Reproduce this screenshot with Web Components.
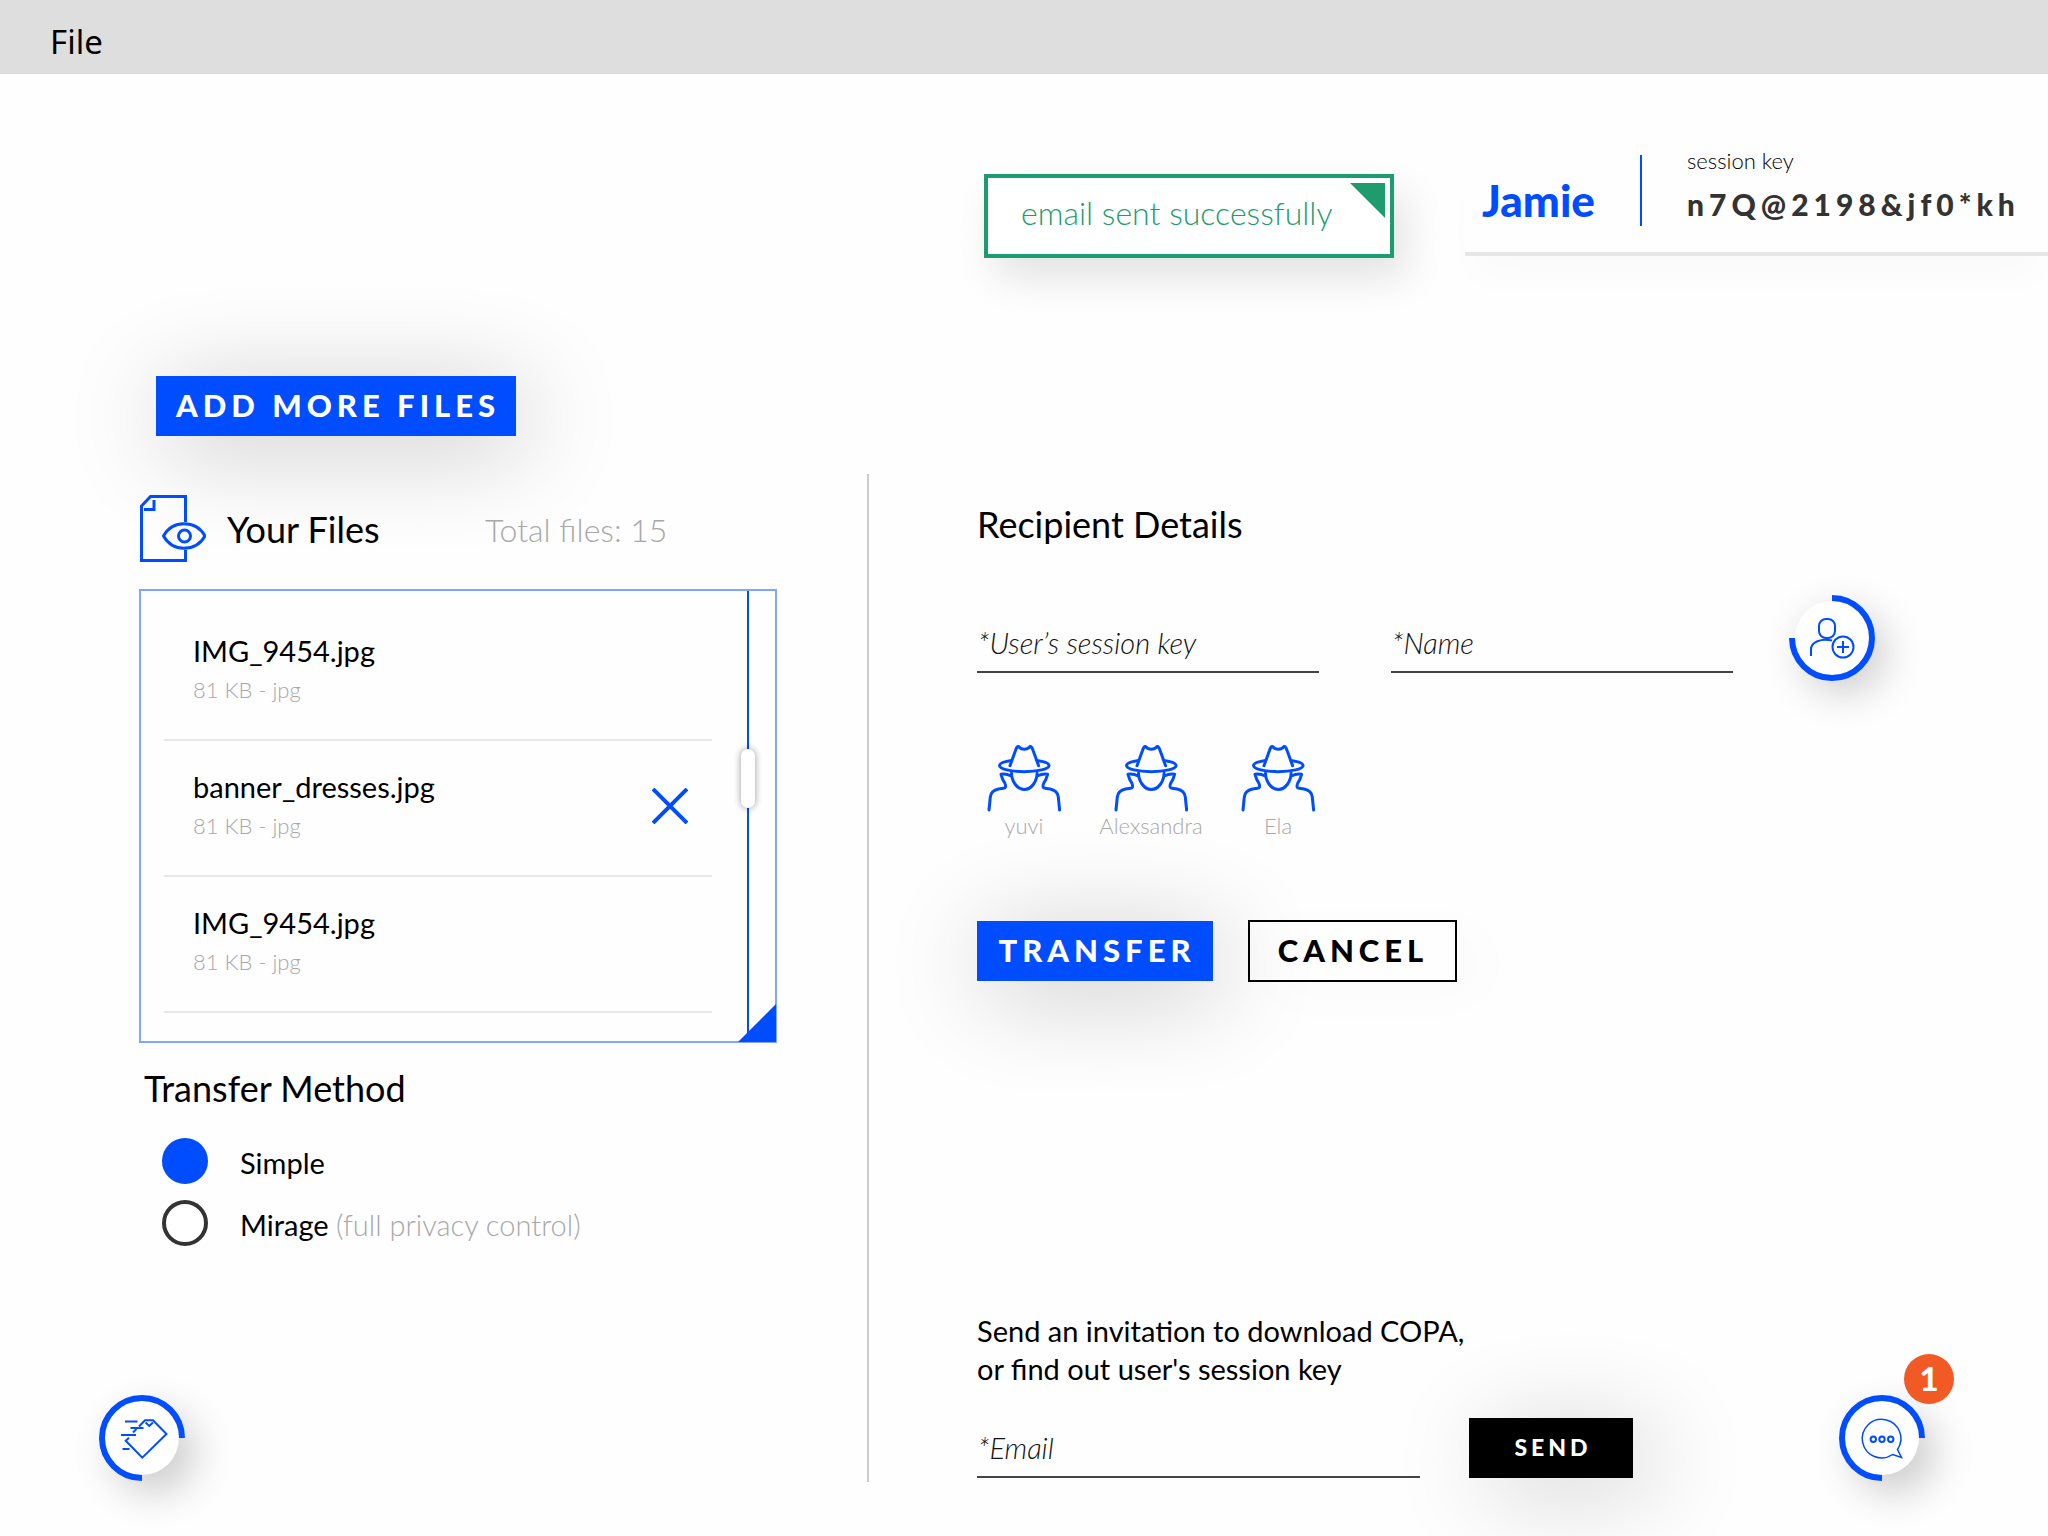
<!DOCTYPE html>
<html lang="en">
<head>
<meta charset="utf-8">
<title>COPA – file transfer</title>
<style>
  html, body { margin: 0; }
  body {
    --blue: #004dff;
    --green: #1f9c6e;
    --ink: #333;
    --muted: #a8a8a8;
    --text: 29px;
    --small: 22px;
    --title: 36px;
    background: #fefefe;
    color: #000;
    font-family: Lato, "Liberation Sans", sans-serif;
    font-weight: 400;
    overflow-x: hidden;
  }
</style>
</head>
<body>
<copa-app></copa-app>

<script>
  const define = (name, html, setup) => customElements.define(name, class extends HTMLElement {
    constructor() {
      super();
      const root = this.attachShadow({ mode: "open" });
      root.innerHTML = `<style>*{box-sizing:border-box}:host{display:block}:host([hidden]){display:none}</style>` + html;
    }
    connectedCallback() { if (setup) setup(this, this.shadowRoot); }
  });

  /* Application menu strip */
  define("menu-bar", `
    <style>
      :host { background: #dedede; height: 74px; }
      nav { display: flex; align-items: center; height: 100%; padding: 10px 48px 0; }
      button { border: 0; background: none; padding: 0 2px; color: #000; font: 400 33px/40px "Noto Sans", "Open Sans", sans-serif; }
    </style>
    <nav><button type="button"><slot></slot></button></nav>`);

  /* Success message with a folded corner */
  define("status-notice", `
    <style>
      :host { position: relative; border: 4px solid var(--green); background: #fff; color: var(--green);
        padding: 14px 52px 20px 33px; font-size: 32px; line-height: 42px; font-weight: 300; white-space: nowrap;
        box-shadow: 12px 20px 40px rgba(0,0,0,.11); }
      svg { position: absolute; top: 5px; right: 5px; width: 35px; height: 35px; fill: var(--green); }
    </style>
    <div role="status"><slot></slot></div>
    <svg viewBox="0 0 35 35" aria-hidden="true"><path d="M0 0h35v35z"/></svg>`);

  /* Signed-in user and the key of the session */
  define("session-panel", `
    <style>
      :host { border-bottom: 4px solid #e6e6e6; box-shadow: 0 30px 40px -10px rgba(0,0,0,.02); }
      .row { display: flex; height: 102px; padding: 0 30px 0 17px; }
      .user { flex: none; color: var(--blue); font-weight: 900; font-size: 44px; line-height: 50px; padding-top: 25px; width: 158px; }
      .rule { flex: none; width: 2px; height: 71px; margin-top: 5px; background: var(--blue); }
      .key { padding-left: 45px; color: var(--ink); white-space: nowrap; }
      .label { font-size: var(--small); line-height: 22px; font-weight: 300; color: #000; }
      .value { font-size: 30px; line-height: 40px; padding-top: 12px; font-weight: 900; letter-spacing: 5px; }
    </style>
    <div class="row">
      <div class="user"><slot name="user"></slot></div>
      <div class="rule"></div>
      <div class="key">
        <div class="label">session key</div>
        <div class="value"><slot name="key"></slot></div>
      </div>
    </div>`);

  /* Rectangular push button: blue by default, "outline" or "dark" */
  define("push-button", `
    <style>
      :host { flex: none; }
      button { display: block; width: 100%; height: 60px; padding: 0 0 2px 4px; border: 0; border-radius: 0;
        background: var(--blue); color: #fff; font: 900 31px/58px Lato, sans-serif; letter-spacing: 5px; white-space: nowrap;
        box-shadow: 8px 12px 100px rgba(0,0,0,.23); }
      :host([kind="outline"]) button { height: 62px; line-height: 56px; padding-left: 1px; background: transparent; color: #000; border: 2px solid #000;
        box-shadow: 24px 12px 60px rgba(0,0,0,.02); }
      :host([kind="dark"]) button { background: #000; font-size: 23px; letter-spacing: 4px; box-shadow: 20px 12px 100px rgba(0,0,0,.2); }
    </style>
    <button type="button"><slot></slot></button>`);

  /* Round button with a three-quarter ring */
  define("ring-button", `
    <style>
      :host { position: relative; flex: none; width: 86px; height: 86px; }
      button { display: block; width: 86px; height: 86px; padding: 0; border: 0; border-radius: 50%; background: none; }
      .disc { width: 74px; height: 74px; margin: 6px; border-radius: 50%; background: #fff; box-shadow: 12px 14px 40px 4px rgba(0,0,0,.2); }
      svg, ::slotted(svg) { position: absolute; inset: 0; width: 86px; height: 86px; fill: none; stroke: var(--blue); stroke-width: 2; }
      .badge { position: absolute; left: 65px; top: -41px; width: 50px; height: 50px; border-radius: 50%; background: #f15a24; color: #fff;
        font: 900 33px/48px Lato, sans-serif; text-align: center; }
      .badge[hidden] { display: none; }
    </style>
    <button type="button">
      <div class="disc"></div>
      <svg viewBox="0 0 86 86" aria-hidden="true"></svg>
      <slot></slot>
    </button>
    <span class="badge" hidden></span>`,
    (host, root) => {
      root.querySelector("svg").innerHTML = host.getAttribute("open-at") === "top-left"
        ? `<path stroke-width="6" d="M43 3A40 40 0 1 1 3 43"/>`
        : `<path stroke-width="6" d="M43 83A40 40 0 1 1 83 43"/>`;
      root.querySelector("button").setAttribute("aria-label", host.getAttribute("label"));
      const count = host.getAttribute("count"), badge = root.querySelector(".badge");
      badge.hidden = !count;
      badge.textContent = count || "";
    });

  /* Underlined text box */
  define("line-field", `
    <style>
      :host { min-width: 0; }
      input { display: block; width: 100%; height: 60px; padding: 0 1px; border: 0; border-bottom: 2px solid #444; border-radius: 0;
        outline: 0; background: transparent; font: italic 300 var(--text)/38px Lato, sans-serif; color: #111; }
      input::placeholder { color: #111; opacity: 1; }
    </style>
    <input>`,
    (host, root) => {
      const input = root.querySelector("input");
      input.type = host.getAttribute("type") || "text";
      input.placeholder = host.getAttribute("placeholder");
      input.setAttribute("aria-label", host.getAttribute("label"));
    });

  /* One row of the file list */
  define("file-item", `
    <style>
      :host { display: flex; align-items: center; justify-content: space-between; height: 136px; padding: 0 24px 4px 29px; border-bottom: 2px solid #e9e9e9; }
      .text { padding-bottom: 4px; }
      .name { font-size: var(--text); line-height: 38px; }
      .meta { margin-top: 6px; font-size: var(--small); line-height: 28px; font-weight: 300; color: var(--muted); }
      button { display: none; padding: 0; border: 0; background: none; }
      :host([removable]) button { display: block; }
      svg { display: block; width: 36px; height: 36px; fill: none; stroke: var(--blue); stroke-width: 4; }
    </style>
    <div class="text">
      <div class="name"><slot></slot></div>
      <div class="meta"><slot name="meta"></slot></div>
    </div>
    <button type="button" aria-label="Remove file"><svg viewBox="0 0 36 36"><path d="M1 1l34 34M35 1L1 35"/></svg></button>`,
    host => host.setAttribute("role", "listitem"));

  define("file-list", `
    <style>
      :host { position: relative; display: flex; height: 454px; border: 2px solid #80a6ff; }
      .items { flex: 1; min-width: 0; padding: 14px 35px 0 23px; overflow: hidden; }
      .rail { position: relative; width: 28px; border-left: 2px solid var(--blue); }
      .thumb { position: absolute; left: -8px; top: 158px; width: 14px; height: 59px; border-radius: 7px; background: #fff; box-shadow: 0 0 7px rgba(0,0,0,.4); }
      svg { position: absolute; right: -1px; bottom: -1px; width: 38px; height: 38px; fill: var(--blue); }
    </style>
    <div class="items" role="list"><slot></slot></div>
    <div class="rail"><div class="thumb"></div></div>
    <svg viewBox="0 0 38 38" aria-hidden="true"><path d="M38 0v38H0z"/></svg>`);

  /* Pair of transfer methods */
  define("transfer-method", `
    <style>
      fieldset { margin: 0; padding: 0; border: 0; }
      legend { padding: 0 0 0 5px; font-size: var(--title); line-height: 46px; }
      .options { display: flex; flex-direction: column; gap: 16px; padding: 27px 0 0 23px; }
      label { display: flex; align-items: center; gap: 32px; height: 46px; font-size: var(--text); line-height: 46px; }
      input { appearance: none; flex: none; width: 46px; height: 46px; margin: 0; border: 4px solid var(--ink); border-radius: 50%; background: #fff; }
      input:checked { border-color: var(--blue); background: var(--blue); }
      span { padding-top: 3px; }
      em { font-style: normal; font-weight: 300; color: var(--muted); }
    </style>
    <fieldset>
      <legend>Transfer Method</legend>
      <div class="options">
        <label><input type="radio" name="method" checked><span>Simple</span></label>
        <label><input type="radio" name="method"><span>Mirage <em>(full privacy control)</em></span></label>
      </div>
    </fieldset>`);

  /* Anonymous contact */
  define("agent-contact", `
    <style>
      :host { display: flex; flex-direction: column; align-items: center; width: 94px; }
      svg { display: block; width: 75px; height: 67px; fill: none; stroke: var(--blue); stroke-width: 3; stroke-linecap: round; stroke-linejoin: round; }
      span { font-size: var(--small); line-height: 27px; font-weight: 300; color: var(--muted); white-space: nowrap; }
    </style>
    <svg viewBox="0 0 75 67" aria-hidden="true">
      <path d="M23 20.7L28.5 5.5Q30 1 31.5 1.5Q34 4.3 37.3 4.3Q40.6 4.3 43.1 1.5Q44.6 1 46.1 5.5L51.6 20.7"/>
      <path d="M24.5 15.5C18 16.5 12.5 18 12.5 20.5C12.5 24 24 26.7 37.3 26.7S62.1 24 62.1 20.5C62.1 18 56.6 16.5 50.1 15.5"/>
      <path d="M24.5 28C24.5 36 30 44.5 37.3 44.5S50.1 36 50.1 28"/>
      <path d="M24.3 31Q19 28.5 14 29.3Q15.5 35 17.8 38Q20 43 16.5 43.3L11.5 44Q4 45.5 3.3 52L2 65"/>
      <path d="M50.3 31Q55.6 28.5 60.6 29.3Q59.1 35 56.8 38Q54.6 43 58.1 43.3L63.1 44Q70.6 45.5 71.3 52L72.6 65"/>
    </svg>
    <span><slot></slot></span>`);

  /* Left side: chosen files and method */
  define("files-pane", `
    <style>
      :host { display: flex; flex-direction: column; padding: 117px 90px 55px 99px; }
      .main { padding-left: 40px; }
      .add { width: 360px; margin-left: 17px; }
      .head { display: flex; align-items: center; height: 67px; margin: 59px 0 27px; }
      .head svg { flex: none; width: 67px; height: 67px; fill: none; stroke: var(--blue); stroke-width: 3; }
      h2 { margin: 0; padding-left: 21px; width: 279px; font-size: var(--title); line-height: 44px; font-weight: 400; white-space: nowrap; }
      .total { padding-top: 2px; font-size: 32px; line-height: 46px; font-weight: 300; color: var(--muted); white-space: nowrap; }
      transfer-method { margin-top: 22px; }
      .quick { margin-top: auto; }
    </style>
    <div class="main">
      <push-button class="add">ADD MORE FILES</push-button>
      <div class="head">
        <svg viewBox="0 0 67 67" aria-hidden="true">
          <path d="M46.5 27V1.5H11.5L2.500 11V65.500H46.500V55M15 5v9.500H5"/>
          <path d="M24.500 41C29 33 36 28.800 45 28.800S61.500 33 66 41C61.500 49 54 53.200 45 53.200S29 49 24.500 41z"/>
          <circle cx="45.500" cy="41" r="6"/>
        </svg>
        <h2>Your Files</h2>
        <div class="total">Total files: 15</div>
      </div>
      <file-list>
        <file-item>IMG_9454.jpg<span slot="meta">81 KB - jpg</span></file-item>
        <file-item removable>banner_dresses.jpg<span slot="meta">81 KB - jpg</span></file-item>
        <file-item>IMG_9454.jpg<span slot="meta">81 KB - jpg</span></file-item>
      </file-list>
      <transfer-method></transfer-method>
    </div>
    <ring-button class="quick" label="Quick transfer">
      <svg viewBox="0 0 86 86" aria-hidden="true">
        <path d="M26 26.500H38.500M31.500 33H44.500M22 40H37M23.500 54H30.500"/>
        <path d="M40 31.500L46 25.300H54L67.500 39L43.300 62.700L26.700 45.700L30 42.800M34 37.500L37.500 34M46.500 27.500L50.300 31L54 27.500"/>
      </svg>
    </ring-button>`);

  /* Right side: recipient, contacts, invitation */
  define("recipient-pane", `
    <style>
      :host { display: flex; flex-direction: column; padding: 242px 123px 55px 108px; }
      h2 { margin: 0; font-size: var(--title); line-height: 46px; font-weight: 400; }
      .fields { display: flex; align-items: center; margin-top: 48px; }
      .fields line-field { flex: 0 1 342px; margin: 10px 72px 0 0; }
      .fields line-field + line-field { margin-right: 56px; }
      .agents { display: flex; gap: 33px; margin-top: 64px; }
      .actions { display: flex; align-items: center; gap: 35px; margin-top: 81px; }
      .transfer { width: 236px; }
      .cancel { width: 209px; }
      .bottom { display: flex; align-items: flex-end; justify-content: space-between; margin-top: auto; }
      p { margin: 0 0 30px; font-size: var(--text); line-height: 38px; }
      form { display: flex; align-items: flex-end; gap: 49px; margin-bottom: 3px; }
      form line-field { width: 443px; }
      form push-button { width: 164px; }
    </style>
    <h2>Recipient Details</h2>
    <div class="fields">
      <line-field label="User's session key" placeholder="*User’s session key"></line-field>
      <line-field label="Name" placeholder="*Name"></line-field>
      <ring-button open-at="top-left" label="Add recipient">
        <svg viewBox="0 0 86 86" aria-hidden="true">
          <rect x="30" y="24" width="16" height="19" rx="7"/>
          <path d="M22 61V54.500C22 47 32 43 43 45.500"/>
          <circle cx="54" cy="52" r="10.500"/><path d="M48 52h12M54 46v12"/>
        </svg>
      </ring-button>
    </div>
    <div class="agents">
      <agent-contact>yuvi</agent-contact>
      <agent-contact>Alexsandra</agent-contact>
      <agent-contact>Ela</agent-contact>
    </div>
    <div class="actions">
      <push-button class="transfer">TRANSFER</push-button>
      <push-button class="cancel" kind="outline">CANCEL</push-button>
    </div>
    <div class="bottom">
      <div>
        <p>Send an invitation to download COPA,<br>or find out user's session key</p>
        <form>
          <line-field type="email" label="Email" placeholder="*Email"></line-field>
          <push-button kind="dark">SEND</push-button>
        </form>
      </div>
      <ring-button label="Messages" count="1">
        <svg viewBox="0 0 86 86" aria-hidden="true">
          <path stroke-width="1.500" d="M53.500 59.500L62.500 62.500L58.500 54.500A19.300 19.300 0 1 0 53.500 59.500z"/>
          <circle cx="34.300" cy="44.300" r="2.700"/><circle cx="43" cy="44.300" r="2.700"/><circle cx="51.700" cy="44.300" r="2.700"/>
        </svg>
      </ring-button>
    </div>`);

  /* Whole window */
  define("copa-app", `
    <style>
      :host { display: flex; flex-direction: column; min-height: 100vh; }
      header { display: flex; justify-content: flex-end; gap: 71px; align-items: flex-start; padding-top: 76px; height: 185px; flex: none; }
      status-notice { width: 410px; margin-top: 24px; }
      session-panel { width: 583px; }
      main { flex: 1; display: grid; grid-template-columns: minmax(0, 867fr) 2px minmax(0, 1179fr); }
      .divider { margin: 215px 0 54px; background: #ccc; }
    </style>
    <menu-bar>File</menu-bar>
    <header>
      <status-notice>email sent successfully</status-notice>
      <session-panel><span slot="user">Jamie</span><span slot="key">n7Q@2198&amp;jf0*kh</span></session-panel>
    </header>
    <main>
      <files-pane></files-pane>
      <div class="divider"></div>
      <recipient-pane></recipient-pane>
    </main>`);
</script>
</body>
</html>
